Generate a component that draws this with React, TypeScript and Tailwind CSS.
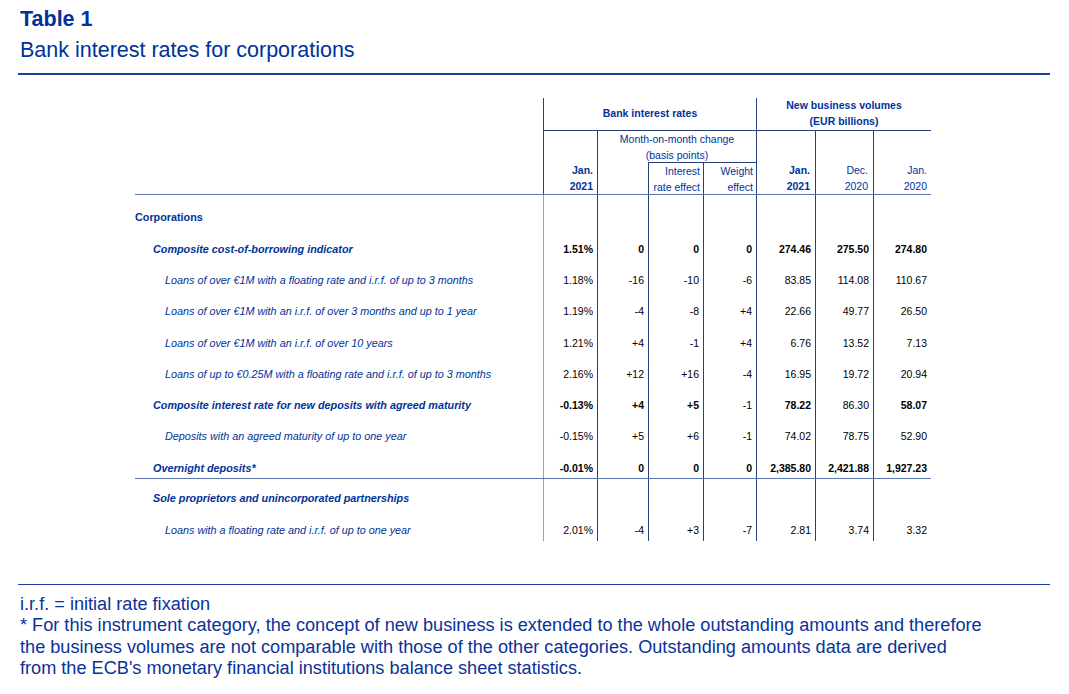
const COLS = 'grid grid-cols-[408px_54px_51px_55px_53px_59px_58px_58px]';

type Row = {
  label: string;
  level: 0 | 1 | 2;
  strong: boolean;
  italic: boolean;
  v: string[];
  b: number[];
};

// first block: corporations
const corpRows: Row[] = [
  { label: 'Corporations', level: 0, strong: true, italic: false, v: [], b: [] },
  {
    label: 'Composite cost-of-borrowing indicator',
    level: 1,
    strong: true,
    italic: true,
    v: ['1.51%', '0', '0', '0', '274.46', '275.50', '274.80'],
    b: [1, 1, 1, 1, 1, 1, 1],
  },
  {
    label: 'Loans of over €1M with a floating rate and i.r.f. of up to 3 months',
    level: 2,
    strong: false,
    italic: true,
    v: ['1.18%', '-16', '-10', '-6', '83.85', '114.08', '110.67'],
    b: [0, 0, 0, 0, 0, 0, 0],
  },
  {
    label: 'Loans of over €1M with an i.r.f. of over 3 months and up to 1 year',
    level: 2,
    strong: false,
    italic: true,
    v: ['1.19%', '-4', '-8', '+4', '22.66', '49.77', '26.50'],
    b: [0, 0, 0, 0, 0, 0, 0],
  },
  {
    label: 'Loans of over €1M with an i.r.f. of over 10 years',
    level: 2,
    strong: false,
    italic: true,
    v: ['1.21%', '+4', '-1', '+4', '6.76', '13.52', '7.13'],
    b: [0, 0, 0, 0, 0, 0, 0],
  },
  {
    label: 'Loans of up to €0.25M with a floating rate and i.r.f. of up to 3 months',
    level: 2,
    strong: false,
    italic: true,
    v: ['2.16%', '+12', '+16', '-4', '16.95', '19.72', '20.94'],
    b: [0, 0, 0, 0, 0, 0, 0],
  },
  {
    label: 'Composite interest rate for new deposits with agreed maturity',
    level: 1,
    strong: true,
    italic: true,
    v: ['-0.13%', '+4', '+5', '-1', '78.22', '86.30', '58.07'],
    b: [1, 1, 1, 0, 1, 0, 1],
  },
  {
    label: 'Deposits with an agreed maturity of up to one year',
    level: 2,
    strong: false,
    italic: true,
    v: ['-0.15%', '+5', '+6', '-1', '74.02', '78.75', '52.90'],
    b: [0, 0, 0, 0, 0, 0, 0],
  },
  {
    label: 'Overnight deposits*',
    level: 1,
    strong: true,
    italic: true,
    v: ['-0.01%', '0', '0', '0', '2,385.80', '2,421.88', '1,927.23'],
    b: [1, 1, 1, 1, 1, 1, 1],
  },
];

const soleRows: Row[] = [
  {
    label: 'Sole proprietors and unincorporated partnerships',
    level: 1,
    strong: true,
    italic: true,
    v: [],
    b: [],
  },
  {
    label: 'Loans with a floating rate and i.r.f. of up to one year',
    level: 2,
    strong: false,
    italic: true,
    v: ['2.01%', '-4', '+3', '-7', '2.81', '3.74', '3.32'],
    b: [0, 0, 0, 0, 0, 0, 0],
  },
];

const indent = ['pl-0', 'pl-[18px]', 'pl-[30px]'];

function BodyRow({ row, height, top }: { row: Row; height: string; top: string }) {
  const cells = row.v.length ? row.v : ['', '', '', '', '', '', ''];
  return (
    <div className={`${COLS} ${height}`}>
      <div
        className={`${top} ${indent[row.level]} whitespace-nowrap text-[10.8px] text-[#003299] ${row.strong ? 'font-bold' : ''} ${row.italic ? 'italic' : ''}`}
      >
        {row.label}
      </div>
      {cells.map((val, i) => (
        <div
          key={i}
          className={`${top} border-l pr-[4px] text-right text-black ${i === 0 ? 'border-[#8ea2cc]' : 'border-[#2a3f7a]'} ${row.b[i] ? 'font-bold' : ''}`}
        >
          {val}
        </div>
      ))}
    </div>
  );
}

export default function App() {
  return (
    <div className="w-[1069px] h-[694px] bg-white font-['Liberation_Sans',Arial,sans-serif] px-[18px] pt-[7px]">
      {/* Title */}
      <div className="pl-[2px] text-[#003299]">
        <div className="text-[21.5px] leading-[25px] font-bold">Table 1</div>
        <div className="mt-[6px] text-[21.5px] leading-[25px]">Bank interest rates for corporations</div>
      </div>
      <div className="mt-[10px] h-[1.5px] w-[1032px] bg-[#1b3f9c]" />

      {/* Table */}
      <div className="ml-[117px] mt-[23px] w-[796px] text-[10.5px] leading-[16px]">
        <div className={`${COLS} grid-rows-[33px_31px_32px] border-b border-[#5b74ab] text-[#003299]`}>
          <div className="col-start-1 row-start-1 row-span-3" />
          <div className="col-start-2 col-span-4 row-start-1 border-l border-b border-[#2a3f7a] flex items-center justify-center pb-[2px] font-bold">
            Bank interest rates
          </div>
          <div className="col-start-6 col-span-3 row-start-1 border-l border-b border-[#2a3f7a] flex flex-col items-center justify-center pb-[2px] font-bold text-center">
            <span>New business volumes</span>
            <span>(EUR billions)</span>
          </div>
          <div className="col-start-2 row-start-2 row-span-2 border-l border-[#2a3f7a] flex flex-col items-end justify-end pr-[4px] font-bold">
            <span>Jan.</span>
            <span>2021</span>
          </div>
          <div className="col-start-3 col-span-3 row-start-2 border-l border-[#2a3f7a] flex flex-col items-center">
            <span>Month-on-month change</span>
            <span>(basis points)</span>
          </div>
          <div className="col-start-3 row-start-3 border-l border-[#2a3f7a]" />
          <div className="col-start-4 row-start-3 border-l border-t border-[#2a3f7a] flex flex-col items-end pr-[3px] whitespace-nowrap">
            <span>Interest</span>
            <span>rate effect</span>
          </div>
          <div className="col-start-5 row-start-3 border-l border-t border-[#2a3f7a] flex flex-col items-end pr-[3px]">
            <span>Weight</span>
            <span>effect</span>
          </div>
          <div className="col-start-6 row-start-2 row-span-2 border-l border-[#2a3f7a] flex flex-col items-end justify-end pr-[5px] font-bold">
            <span>Jan.</span>
            <span>2021</span>
          </div>
          <div className="col-start-7 row-start-2 row-span-2 border-l border-[#2a3f7a] flex flex-col items-end justify-end pr-[5px]">
            <span>Dec.</span>
            <span>2020</span>
          </div>
          <div className="col-start-8 row-start-2 row-span-2 border-l border-[#2a3f7a] flex flex-col items-end justify-end pr-[4px]">
            <span>Jan.</span>
            <span>2020</span>
          </div>
        </div>

        <div className="border-b border-[#5b74ab]">
          {corpRows.map((r, i) => (
            <BodyRow
              key={r.label}
              row={r}
              height={i === corpRows.length - 1 ? 'h-[33px]' : 'h-[31.25px]'}
              top={i === 0 ? 'pt-[14px]' : 'pt-[15px]'}
            />
          ))}
        </div>

        <div>
          {soleRows.map((r, i) => (
            <BodyRow key={r.label} row={r} height="h-[31px]" top={i === 0 ? 'pt-[11px]' : 'pt-[12px]'} />
          ))}
        </div>
      </div>

      {/* Notes */}
      <div className="mt-[43px] h-[1.5px] w-[1032px] bg-[#1b3f9c]" />
      <div className="mt-[9px] pl-[2px] text-[18.15px] leading-[21.4px] text-[#0a3299] whitespace-nowrap">
        <div>i.r.f. = initial rate fixation</div>
        <div>
          * For this instrument category, the concept of new business is extended to the whole outstanding amounts and therefore
        </div>
        <div>
          the business volumes are not comparable with those of the other categories. Outstanding amounts data are derived
        </div>
        <div>from the ECB's monetary financial institutions balance sheet statistics.</div>
      </div>
    </div>
  );
}
